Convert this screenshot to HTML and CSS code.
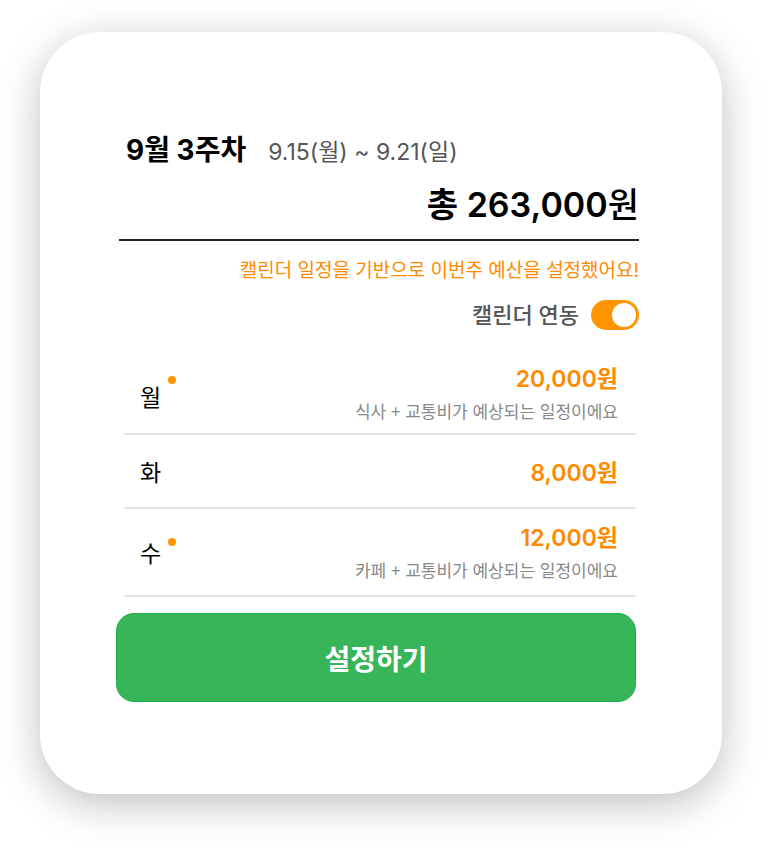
FILE: index.html
```html
<!DOCTYPE html>
<html lang="ko">
<head>
<meta charset="utf-8">
<meta name="viewport" content="width=device-width, initial-scale=1">
<title>주간 예산 설정</title>
<link rel="stylesheet" href="styles.css">
</head>
<body>
<main class="card">
  <header class="week">
    <h1 class="week-title">9월 3주차</h1>
    <p class="week-range">9.15(월) ~ 9.21(일)</p>
  </header>
  <p class="total">총 263,000<span class="unit">원</span></p>
  <p class="notice">캘린더 일정을 기반으로 이번주 예산을 설정했어요!</p>
  <label class="sync">캘린더 연동
    <input class="switch" type="checkbox" role="switch" checked>
  </label>
  <ul class="days">
    <li class="day day-detailed">
      <span class="day-name has-event">월</span>
      <div class="budget">
        <p class="amount">20,000원</p>
        <p class="reason">식사 + 교통비가 예상되는 일정이에요</p>
      </div>
    </li>
    <li class="day">
      <span class="day-name">화</span>
      <div class="budget">
        <p class="amount">8,000원</p>
      </div>
    </li>
    <li class="day day-detailed">
      <span class="day-name has-event">수</span>
      <div class="budget">
        <p class="amount">12,000원</p>
        <p class="reason">카페 + 교통비가 예상되는 일정이에요</p>
      </div>
    </li>
  </ul>
  <button class="submit" type="button">설정하기</button>
</main>
</body>
</html>
```

FILE: styles.css
```css
* {
  box-sizing: border-box;
}

body {
  margin: 0;
  padding: 32px 40px 48px;
  background: #fff;
  color: #000;
  font-family: Inter, "Noto Sans CJK KR", sans-serif;
}

h1, p, ul {
  margin: 0;
  padding: 0;
}

.card {
  display: flex;
  flex-direction: column;
  padding: 96px 83px 92px 76px;
  border-radius: 60px;
  background: #fff;
  box-shadow: 0 10px 40px rgba(0, 0, 0, 0.25);
}

.week {
  display: flex;
  align-items: baseline;
  gap: 22px;
  padding-left: 10px;
  line-height: 44px;
}

.week-title {
  font-size: 28px;
  font-weight: 700;
}

.week-range {
  color: #555;
  font-size: 23px;
}

.total {
  padding: 7px 0 11px;
  margin-left: 3px;
  border-bottom: 2px solid #222;
  font-size: 34px;
  font-weight: 600;
  line-height: 47px;
  text-align: right;
}

.unit {
  font-weight: 500;
}

.notice {
  margin-top: 16px;
  color: #ff8a00;
  font-size: 19px;
  line-height: 28px;
  text-align: right;
}

.sync {
  display: flex;
  align-items: center;
  justify-content: flex-end;
  gap: 12px;
  margin-top: 12px;
  color: #555;
  font-size: 22px;
  font-weight: 500;
  line-height: 36px;
}

.switch {
  display: flex;
  align-items: center;
  justify-content: flex-end;
  width: 48px;
  height: 30px;
  margin: 0;
  padding: 3px;
  border-radius: 15px;
  background: #ff9500;
  appearance: none;
}

.switch::before {
  width: 24px;
  height: 24px;
  border-radius: 50%;
  background: #fff;
  content: "";
}

.switch:not(:checked) {
  justify-content: flex-start;
  background: #bbb;
}

.days {
  margin: 14px 3px 0 8px;
  list-style: none;
}

.day {
  display: flex;
  align-items: center;
  justify-content: space-between;
  min-height: 74px;
  padding: 4px 18px 0 16px;
  border-bottom: 2px solid #e4e4e4;
}

.day-detailed {
  min-height: 88px;
}

.day-detailed:first-child {
  padding-top: 10px;
}

.day-detailed:first-child .day-name {
  padding-top: 6px;
}

.day-name {
  position: relative;
  font-size: 23px;
  line-height: 32px;
}

.has-event::after {
  position: absolute;
  top: 0;
  right: -15px;
  width: 8px;
  height: 8px;
  border-radius: 50%;
  background: #ff9500;
  content: "";
}

.budget {
  text-align: right;
}

.amount {
  color: #ff8a00;
  font-size: 23px;
  font-weight: 600;
  line-height: 32px;
}

.reason {
  color: #888;
  font-family: "Noto Sans CJK KR", sans-serif;
  font-size: 17px;
  line-height: 32px;
}

.submit {
  height: 89px;
  margin: 16px 3px 0 0;
  border: 1px solid #1bb04b;
  border-radius: 18px;
  background: #38b559;
  color: #fff;
  font: inherit;
  font-size: 28px;
  font-weight: 700;
}
```
